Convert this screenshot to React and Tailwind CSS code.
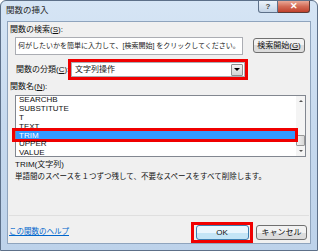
const ui = "font-['Liberation_Sans','Noto_Sans_CJK_JP',sans-serif]";

const items = ["SEARCHB", "SUBSTITUTE", "T", "TEXT", "TRIM", "UPPER", "VALUE"];

function Btn({ children, className = "" }) {
  return (
    <div
      className={`flex items-center justify-center whitespace-nowrap rounded-[3px] border border-[#707070] bg-gradient-to-b from-[#f2f2f2] from-50% to-[#dcdcdc] to-50% text-[8px] leading-none text-[#111] ${className}`}
    >
      {children}
    </div>
  );
}

export default function App() {
  return (
    <div className={`h-[251px] w-[318px] bg-white ${ui}`}>
      <div className="flex h-full w-full flex-col rounded-t-[6px] border border-[#5d7089] bg-gradient-to-b from-[#d6e5f5] via-[#c6d9ee] to-[#bdd2ea]">
        {/* title bar */}
        <div className="flex h-[20px] shrink-0 items-start">
          <span className="ml-[5px] mt-[4px] text-[8.5px] leading-[11px] text-[#2a2a2a]">
            関数の挿入
          </span>
          <div className="ml-auto mr-[7px] flex">
            <div className="flex h-[12px] w-[20px] items-center justify-center rounded-bl-[3px] border border-t-0 border-[#5d7089] bg-gradient-to-b from-[#edf3fa] to-[#c3d3e6] text-[8px] font-bold leading-none text-[#444]">
              ?
            </div>
            <div className="flex h-[12px] w-[32px] items-center justify-center rounded-br-[3px] border border-l-0 border-t-0 border-[#5d3a35] bg-gradient-to-b from-[#e9a897] via-[#d26a55] to-[#c0402c] text-[9px] font-bold leading-none text-white">
              ✕
            </div>
          </div>
        </div>

        {/* client area */}
        <div className="mx-[6px] flex flex-1 flex-col border border-[#8fa4bd] bg-[#f0f0f0] text-[8px] leading-[11px] text-[#111]">
          <div className="ml-[2px] mt-[2px] h-[11px] whitespace-nowrap">
            関数の検索(<span className="underline">S</span>):
          </div>

          <div className="mt-[2px] flex items-start">
            <div className="ml-[7px] h-[18px] w-[228px] whitespace-nowrap border border-[#abadb3] bg-white px-[2px] pt-[3px] text-[7px] leading-[9px] text-[#222]">
              何がしたいかを簡単に入力して、[検索開始] をクリックしてください。
            </div>
            <Btn className="ml-[10px] mt-[1px] h-[15px] w-[52px]">
              検索開始(<span className="underline">G</span>)
            </Btn>
          </div>

          <div className="mt-[4px] flex items-center">
            <div className="ml-[8px] w-[52px] whitespace-nowrap">
              関数の分類(<span className="underline">C</span>):
            </div>
            <div className="h-[21px] w-[180px] border-[3px] border-[#f00000]">
              <div className="flex h-full items-center border border-[#abadb3] bg-white pl-[3px] pr-[1px]">
                <span>文字列操作</span>
                <div className="ml-auto flex h-[12px] w-[12px] items-center justify-center rounded-[1px] border border-[#8e8f8f] bg-gradient-to-b from-[#f2f2f2] to-[#d4d4d4]">
                  <div className="h-0 w-0 border-x-[3px] border-t-[3px] border-x-transparent border-t-black" />
                </div>
              </div>
            </div>
          </div>

          <div className="ml-[2px] mt-[1px] h-[11px] whitespace-nowrap">
            関数名(<span className="underline">N</span>):
          </div>

          {/* function list */}
          <div className="ml-[7px] mt-[3px] flex h-[62px] w-[291px] border border-[#828790] bg-white">
            <div className="flex-1">
              {items.map((it) => (
                <div
                  key={it}
                  className={`relative flex h-[8.8px] items-center pl-[3px] leading-none ${
                    it === "TRIM" ? "bg-[#3399ff] text-white" : ""
                  }`}
                >
                  {it}
                  {it === "TRIM" && (
                    <div className="absolute -bottom-[2px] -left-[4px] -right-[2px] -top-[3px] border-[3px] border-[#f00000]" />
                  )}
                </div>
              ))}
            </div>
            <div className="flex w-[9px] flex-col bg-[#f4f4f4]">
              <div className="flex h-[10px] items-center justify-center">
                <div className="h-0 w-0 border-x-[2.5px] border-b-[2.5px] border-x-transparent border-b-[#555]" />
              </div>
              <div className="flex-1" />
              <div className="h-[11px] rounded-[1px] border border-[#999] bg-gradient-to-r from-[#f2f2f2] to-[#d8d8d8]" />
              <div className="flex h-[10px] items-center justify-center">
                <div className="h-0 w-0 border-x-[2.5px] border-t-[2.5px] border-x-transparent border-t-[#555]" />
              </div>
            </div>
          </div>

          <div className="ml-[7px] mt-[2px] h-[11px]">TRIM(文字列)</div>
          <div className="ml-[7px] mt-[1px] h-[11px] whitespace-nowrap text-[7.5px]">
            単語間のスペースを１つずつ残して、不要なスペースをすべて削除します。
          </div>

          <div className="mx-[1px] mt-[33px] h-px bg-[#dfdfdf]" />

          <div className="flex items-center">
            <span className="ml-[1px] mt-[4px] text-[7.5px] text-[#0066cc] underline">
              この関数のヘルプ
            </span>
            <div className="ml-auto mt-[6px] flex h-[21px] w-[62px] items-center justify-center border-[3px] border-[#f00000]">
              <div className="flex h-[15px] w-[53px] items-center justify-center rounded-[3px] border border-[#3c7fb1] bg-gradient-to-b from-[#eaf6fd] from-50% to-[#c4e5f6] to-50% leading-none">
                OK
              </div>
            </div>
            <Btn className="ml-[3px] mr-[3px] mt-[6px] h-[15px] w-[51px]">キャンセル</Btn>
          </div>
        </div>
        <div className="h-[6px] shrink-0" />
      </div>
    </div>
  );
}
